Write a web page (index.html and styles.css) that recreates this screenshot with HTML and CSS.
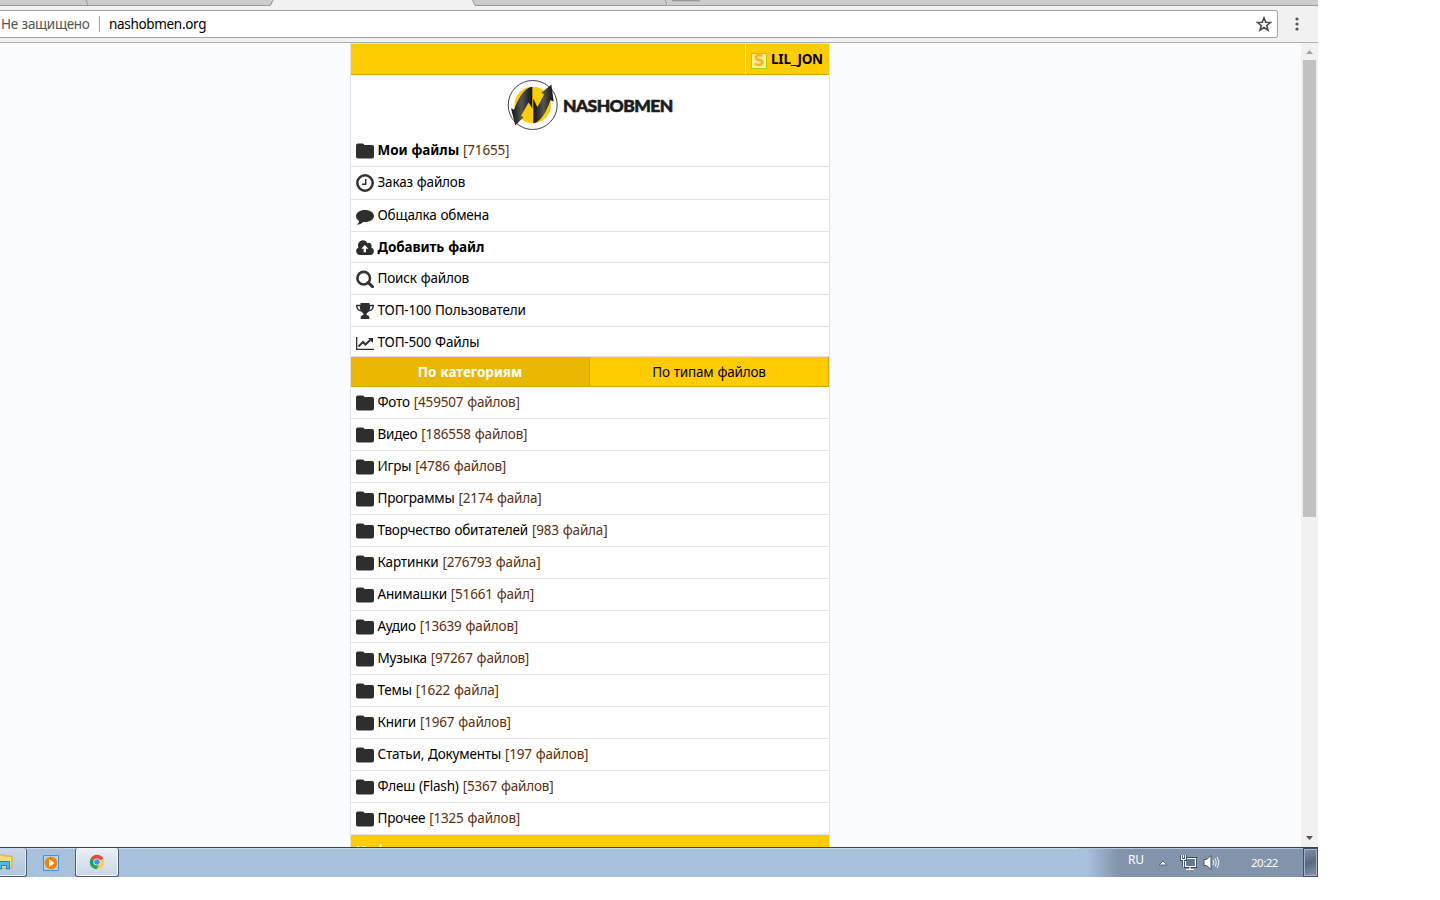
FILE: index.html
```
<!DOCTYPE html>
<html lang="ru">
<head>
  <meta charset="UTF-8">
  <meta name="viewport" content="width=device-width, initial-scale=1.0">
  <title>Nashobmen</title>
  <link rel="stylesheet" href="styles.css">
</head>
<body>
  <svg class="sprite" width="0" height="0">
    <symbol id="folder" viewBox="0 0 18 18"><path d="M2 1.500h4.500q1.600 0 1.900 1.600h7.600q2 0 2 2v9.500q0 2-2 2H2q-2 0-2-2V3.500q0-2 2-2z"/></symbol>
    <symbol id="clock" viewBox="0 0 18 18"><circle cx="9" cy="9" r="7.700" fill="none" stroke="#333" stroke-width="2.500"/><path d="M9.700 5v5.200H6" fill="none" stroke="#333" stroke-width="1.500"/></symbol>
    <symbol id="chat" viewBox="0 0 18 18"><path d="M9 3c5 0 9 2.600 9 6s-4 6-9 6l-1.700-.1C5.600 16.500 3.500 17.500 1 17.700c1.200-1 2-2.200 2.100-3.600C1.200 12.900 0 11.100 0 9c0-3.400 4-6 9-6z"/></symbol>
    <symbol id="upload" viewBox="0 0 18 18"><path d="M4 16a4 4 0 0 1-1.600-7.600A5 5 0 0 1 11.500 4.200a2.900 2.900 0 0 1 3.700 4.200A3.900 3.900 0 0 1 14.300 16z"/><path d="M8.800 6L5.300 9.800h2.300v3.500h2.400V9.800h2.300z" fill="#fff"/></symbol>
    <symbol id="search" viewBox="0 0 18 18"><circle cx="7.700" cy="8.200" r="6.300" fill="none" stroke="#333" stroke-width="2.600"/><path d="M12.300 12.600l4.200 4" stroke="#333" stroke-width="3" stroke-linecap="round"/></symbol>
    <symbol id="cup" viewBox="0 0 18 18"><path d="M4.500 1h9v1.800H18c0 4-1.700 6.300-5.200 6.600-.9 1.300-2.300 1.800-2.300 2.800 0 1.300 2.800 1 2.800 3V17H4.700v-1.800c0-2 2.800-1.700 2.800-3 0-1-1.400-1.500-2.300-2.800C1.700 9.100 0 6.800 0 2.800h4.500zM1.500 4.300c.2 2 1.100 3.200 2.900 3.600-.4-1-.6-2.200-.6-3.600zm15 0h-2.300c0 1.400-.2 2.600-.6 3.600 1.800-.4 2.700-1.600 2.900-3.600z"/></symbol>
    <symbol id="chart" viewBox="0 0 18 18"><path d="M0 3h1.300v11.700H18V16H0z"/><path d="M2.500 12.500L7 8l2.500 2.500L14.300 6" fill="none" stroke="#333" stroke-width="2"/><path d="M12 4h5v5z"/></symbol>
  </svg>

  <div class="screen">
    <div class="tabstrip">
      <svg width="1318" height="6">
        <path d="M0 0H1318V6H0z" fill="#ccc"/>
        <path d="M0 5.500H88L86 0M90 5.500H270L273 0M88 5.500h4M475 5.500H667L665 0M668 5.500H1318" stroke="#999" fill="none"/>
        <path d="M273 0L270 6H475L472.500 0z" fill="#f1f1f1"/>
        <path d="M273 0L270.500 5.500M472.500 0L475 5.500" stroke="#999"/>
        <path d="M672 .5h28" stroke="#999" stroke-width="1.500"/>
      </svg>
    </div>
    <div class="toolbar">
      <div class="omnibox">
        <span class="secure">Не защищено</span>
        <span class="url">nashobmen.org</span>
        <svg class="star" width="16" height="16"><path d="M8 1.800l1.700 4.400 4.700.3-3.600 3 1.200 4.600L8 11.500l-4 2.600 1.200-4.600-3.600-3 4.700-.3z" fill="none" stroke="#4a4a4a" stroke-width="1.600"/></svg>
      </div>
      <svg class="dots" width="4" height="16"><circle cx="2" cy="3" r="1.600"/><circle cx="2" cy="8" r="1.600"/><circle cx="2" cy="13" r="1.600"/></svg>
    </div>

    <div class="viewport">
      <div class="page">
        <div class="header">
          <a class="user">
            <span class="badge">S</span>
            LIL_JON
          </a>
        </div>
        <div class="logo">
          <svg width="51" height="52">
            <defs>
              <linearGradient id="dark"><stop offset="0" stop-color="#111"/><stop offset=".5" stop-color="#555"/><stop offset="1" stop-color="#111"/></linearGradient>
            </defs>
            <circle cx="25.700" cy="26" r="24.500" fill="#fff" stroke="#444"/>
            <circle cx="25.700" cy="26" r="18.300" fill="#fc0"/>
            <path d="M25.300 7.700v21.800l-3.800-6c-2.500 5-5.500 9.500-7.500 13.500l2.500 1.200L8.300 46.500 4 29.300l3 1.500C11 20 17 8.500 25.300 7.700z" fill="url(#dark)"/>
            <path d="M26.300 44.300V19.500l4 8.500c2.500-4 5-9 6.700-12.800l-2.600-1.500L44.400 5.500l2.200 17-3.200-1.300C40 32 33 43.800 26.300 44.300z" fill="url(#dark)"/>
          </svg>
          <span class="brand">NASHOBMEN</span>
        </div>

        <ul class="list menu">
          <li><svg><use href="#folder"/></svg><span><b>Мои файлы</b> <i>[71655]</i></span></li>
          <li class="tall"><svg><use href="#clock"/></svg>Заказ файлов</li>
          <li><svg><use href="#chat"/></svg>Общалка обмена</li>
          <li class="short"><svg><use href="#upload"/></svg><b>Добавить файл</b></li>
          <li><svg><use href="#search"/></svg>Поиск файлов</li>
          <li><svg><use href="#cup"/></svg>ТОП-100 Пользователи</li>
          <li class="last"><svg><use href="#chart"/></svg>ТОП-500 Файлы</li>
        </ul>

        <div class="switch">
          <a class="active">По категориям</a>
          <a>По типам файлов</a>
        </div>

        <ul class="list">
          <li><svg><use href="#folder"/></svg>Фото <i>[459507 файлов]</i></li>
          <li><svg><use href="#folder"/></svg>Видео <i>[186558 файлов]</i></li>
          <li><svg><use href="#folder"/></svg>Игры <i>[4786 файлов]</i></li>
          <li><svg><use href="#folder"/></svg>Программы <i>[2174 файла]</i></li>
          <li><svg><use href="#folder"/></svg>Творчество обитателей <i>[983 файла]</i></li>
          <li><svg><use href="#folder"/></svg>Картинки <i>[276793 файла]</i></li>
          <li><svg><use href="#folder"/></svg>Анимашки <i>[51661 файл]</i></li>
          <li><svg><use href="#folder"/></svg>Аудио <i>[13639 файлов]</i></li>
          <li><svg><use href="#folder"/></svg>Музыка <i>[97267 файлов]</i></li>
          <li><svg><use href="#folder"/></svg>Темы <i>[1622 файла]</i></li>
          <li><svg><use href="#folder"/></svg>Книги <i>[1967 файлов]</i></li>
          <li><svg><use href="#folder"/></svg>Статьи, Документы <i>[197 файлов]</i></li>
          <li><svg><use href="#folder"/></svg>Флеш (Flash) <i>[5367 файлов]</i></li>
          <li><svg><use href="#folder"/></svg>Прочее <i>[1325 файлов]</i></li>
        </ul>
        <div class="info">Информация</div>
      </div>
      <div class="scrollbar">
        <svg width="17" height="17"><path d="M5 11l3.500-4 3.500 4z" fill="#a3a3a3"/></svg>
        <div class="thumb"></div>
        <svg width="17" height="17"><path d="M5 6l3.500 4 3.500-4z" fill="#505050"/></svg>
      </div>
    </div>

    <div class="taskbar">
      <div class="task explorer">
        <svg width="14" height="16"><path d="M0 1h5v1h8v12H0z" fill="#ecd98a" stroke="#c9a93e"/><path d="M0 7.500h10.500V15H7.500v-3.500H2.500V15H0z" fill="#4eb8e6" stroke="#2c86b5"/></svg>
      </div>
      <div class="task player">
        <svg width="16" height="16"><path d="M.5.500h15v15H.5z" fill="#a9d5ee" stroke="#4594cb"/><circle cx="8" cy="8" r="6.200" fill="#f78100"/><path d="M6 4l5.500 4L6 12z" fill="#fff"/></svg>
      </div>
      <div class="task chrome">
        <svg width="16" height="16" viewBox="0 0 16 16"><circle cx="8" cy="8" r="7.200" fill="#fc4"/><path d="M8 8L1.760 4.400A7.200 7.200 0 0 1 14.240 4.400z" fill="#dd4b3e"/><path d="M8 4.400h6.240L14.700 5H8z" fill="#dd4b3e"/><path d="M8 8L1.760 4.400A7.200 7.200 0 0 0 7.500 15.200L10.500 10z" fill="#1da362"/><circle cx="8" cy="8" r="3.600" fill="#eee"/><circle cx="8" cy="8" r="2.700" fill="#4c8bf5"/></svg>
      </div>
      <div class="tray">
        <span class="lang">RU</span>
        <svg class="up" width="10" height="6"><path d="M1 5l4-4 4 4z" fill="#fff" stroke="#56667c"/></svg>
        <svg class="net" width="17" height="17"><path d="M5.500 4.500h10v8h-10z" fill="#77889f" stroke="#35455b" stroke-width="3"/><path d="M5.500 4.500h10v8h-10zM6 15.500h8M10 13v2" fill="#65768e" stroke="#fff" stroke-width="1.200"/><path d="M1.500 1v4.500h4V1M3.500 1v3M3.500 6v7" fill="none" stroke="#35455b" stroke-width="3"/><path d="M1.500 1v4.500h4V1M3.500 1v3M3.500 6v7" fill="none" stroke="#fff" stroke-width="1.200"/></svg>
        <svg class="sound" width="17" height="17"><path d="M1 5.500h2.500L8 1.500v14l-4.500-4H1z" fill="#fff" stroke="#42526a"/><path d="M10 6q1.500 2.500 0 5M12 4.500q2.500 4 0 8M14 3q3.500 5.500 0 11" fill="none" stroke="#e8edf3" stroke-width="1.100"/></svg>
        <span class="time">20:22</span>
        <div class="desktop"></div>
      </div>
    </div>
  </div>
</body>
</html>
```
FILE: styles.css
```
* {
  box-sizing: border-box;
}

body {
  margin: 0;
  background-color: #fff;
  font-family: "Noto Sans", "Open Sans", sans-serif;
  font-size: 13.5px;
  letter-spacing: -0.18px;
  word-spacing: 0.6px;
  color: #000;
}

b {
  letter-spacing: -0.08px;
}

svg {
  display: block;
  flex: none;
}

.sprite {
  display: none;
}

.screen {
  width: 1318px;
  height: 877px;
  display: flex;
  flex-direction: column;
  overflow: hidden;
}

.tabstrip {
  height: 6px;
}

/* browser toolbar */
.toolbar {
  height: 37px;
  display: flex;
  padding-top: 4px;
  background-color: #f1f1f1;
  border-bottom: 1px solid #b0b0b0;
}

.omnibox {
  width: 1278px;
  height: 28px;
  display: flex;
  align-items: center;
  background-color: #fff;
  border: 1px solid #a3a3a3;
  border-left: none;
  border-radius: 0 3px 3px 0;
  letter-spacing: -0.32px;
}

.secure {
  width: 100px;
  padding-left: 1px;
  border-right: 1px solid #a0a0a0;
  color: #555;
  line-height: 16px;
  white-space: nowrap;
}

.url {
  padding-left: 9px;
}

.star {
  margin-left: auto;
  margin-right: 5px;
}

.dots {
  margin: 6px 0 0 16.5px;
  fill: #555;
}

/* site */
.viewport {
  flex: 1;
  min-height: 0;
  display: flex;
  overflow: hidden;
  background-color: #fafbfd;
}

.page {
  width: 480px;
  height: 830px;
  flex: none;
  margin-left: 350px;
  border: 1px solid #e1e1e3;
  background-color: #fff;
}

.header {
  height: 31px;
  display: flex;
  justify-content: flex-end;
  background-color: #fc0;
  border-bottom: 1px solid #d9a300;
}

.user {
  width: 84px;
  display: flex;
  align-items: center;
  padding-left: 5px;
  gap: 4px;
  border-left: 1px solid #ffe98c;
  font-weight: bold;
  letter-spacing: -0.2px;
  white-space: nowrap;
}

.badge {
  width: 16px;
  height: 16px;
  margin-top: 3px;
  border: 1px solid #9fd400;
  background-color: #ffee8a;
  color: #fbae36;
  font-family: "DejaVu Sans", sans-serif;
  font-size: 15px;
  line-height: 14px;
  text-align: center;
}

.logo {
  height: 60px;
  display: flex;
  padding: 4px 0 0 156px;
}

.brand {
  margin-left: 5px;
  color: #1d1d1d;
  font-family: Lato, sans-serif;
  font-size: 17.5px;
  font-weight: 900;
  line-height: 54px;
  letter-spacing: -0.6px;
  -webkit-text-stroke: 0.6px #1d1d1d;
}

.list {
  margin: 0;
  padding: 0;
  list-style: none;
}

.list li {
  height: 32px;
  display: flex;
  align-items: flex-start;
  padding-left: 5px;
  border-bottom: 1px solid #e1e1e3;
  line-height: 31px;
  white-space: pre;
}

.list svg {
  width: 18px;
  height: 18px;
  margin: 7px 3.5px 0 0;
  fill: #2e2e2e;
}

.list i {
  font-style: normal;
  color: #5f2e0c;
}

.list .tall {
  height: 33px;
}

.list .short {
  height: 31px;
}

.list .last {
  height: 30px;
}

.switch {
  height: 30px;
  display: flex;
}

.switch a {
  flex: 1;
  background-color: #fc0;
  border-right: 1px solid #d9a300;
  border-bottom: 1px solid #d9a300;
  line-height: 30px;
  text-align: center;
}

.switch .active {
  background-color: #eab700;
  color: #fff;
  font-weight: bold;
  letter-spacing: -0.05px;
}

.info {
  height: 30px;
  padding-left: 5px;
  background-color: #fc0;
  color: #fff;
  font-weight: bold;
  line-height: 32px;
}

.scrollbar {
  width: 17px;
  margin-left: auto;
  display: flex;
  flex-direction: column;
  background-color: #f1f1f1;
}

.thumb {
  width: 13px;
  height: 457px;
  margin: 0 2px auto;
  background-color: #c1c1c1;
}

/* windows taskbar */
.taskbar {
  height: 30px;
  display: flex;
  background-color: #a7c0dc;
  border-top: 1px solid #39424e;
  box-shadow: inset 0 1px #c8d8ea;
}

.task {
  display: flex;
  align-items: center;
  justify-content: center;
}

.explorer {
  width: 27px;
  padding-right: 14px;
  border: 1px solid #4f5d70;
  border-left: none;
  border-top: none;
  border-radius: 0 3px 3px 0;
  background: linear-gradient(#c9d8e9, #b0c6e0);
  box-shadow: inset -1px -1px #e3ecf5;
}

.player {
  width: 48px;
}

.chrome {
  width: 44px;
  border: 1px solid #4f5d70;
  border-top: none;
  border-radius: 3px;
  background: linear-gradient(#e9eff6, #c8d7e8);
  box-shadow: inset 0 0 0 1px #f4f8fc;
}

.tray {
  width: 240px;
  display: flex;
  margin-left: auto;
  background: linear-gradient(90deg, #a7c0dc 0, #a7c0dc 10px, #8294ab 40px);
  box-shadow: inset 0 1px #b9c9da;
  color: #fff;
  font-size: 12px;
}

.lang {
  width: 18px;
  margin: 4px 0 0 50px;
  line-height: 16px;
  font-size: 12px;
}

.up {
  margin: 12px 0 0 12px;
}

.net {
  margin: 6px 0 0 12px;
}

.sound {
  margin: 6px 0 0 6px;
}

.time {
  margin: 7px 0 0 31px;
  line-height: 16px;
  font-size: 11.5px;
  letter-spacing: -0.5px;
}

.desktop {
  width: 15px;
  margin-left: auto;
  border: 1px solid #414f62;
  background: linear-gradient(160deg, #8394aa 0, #5a6980 50%, #8595aa);
  box-shadow: inset 0 0 0 1px #a3b2c5;
}
```
